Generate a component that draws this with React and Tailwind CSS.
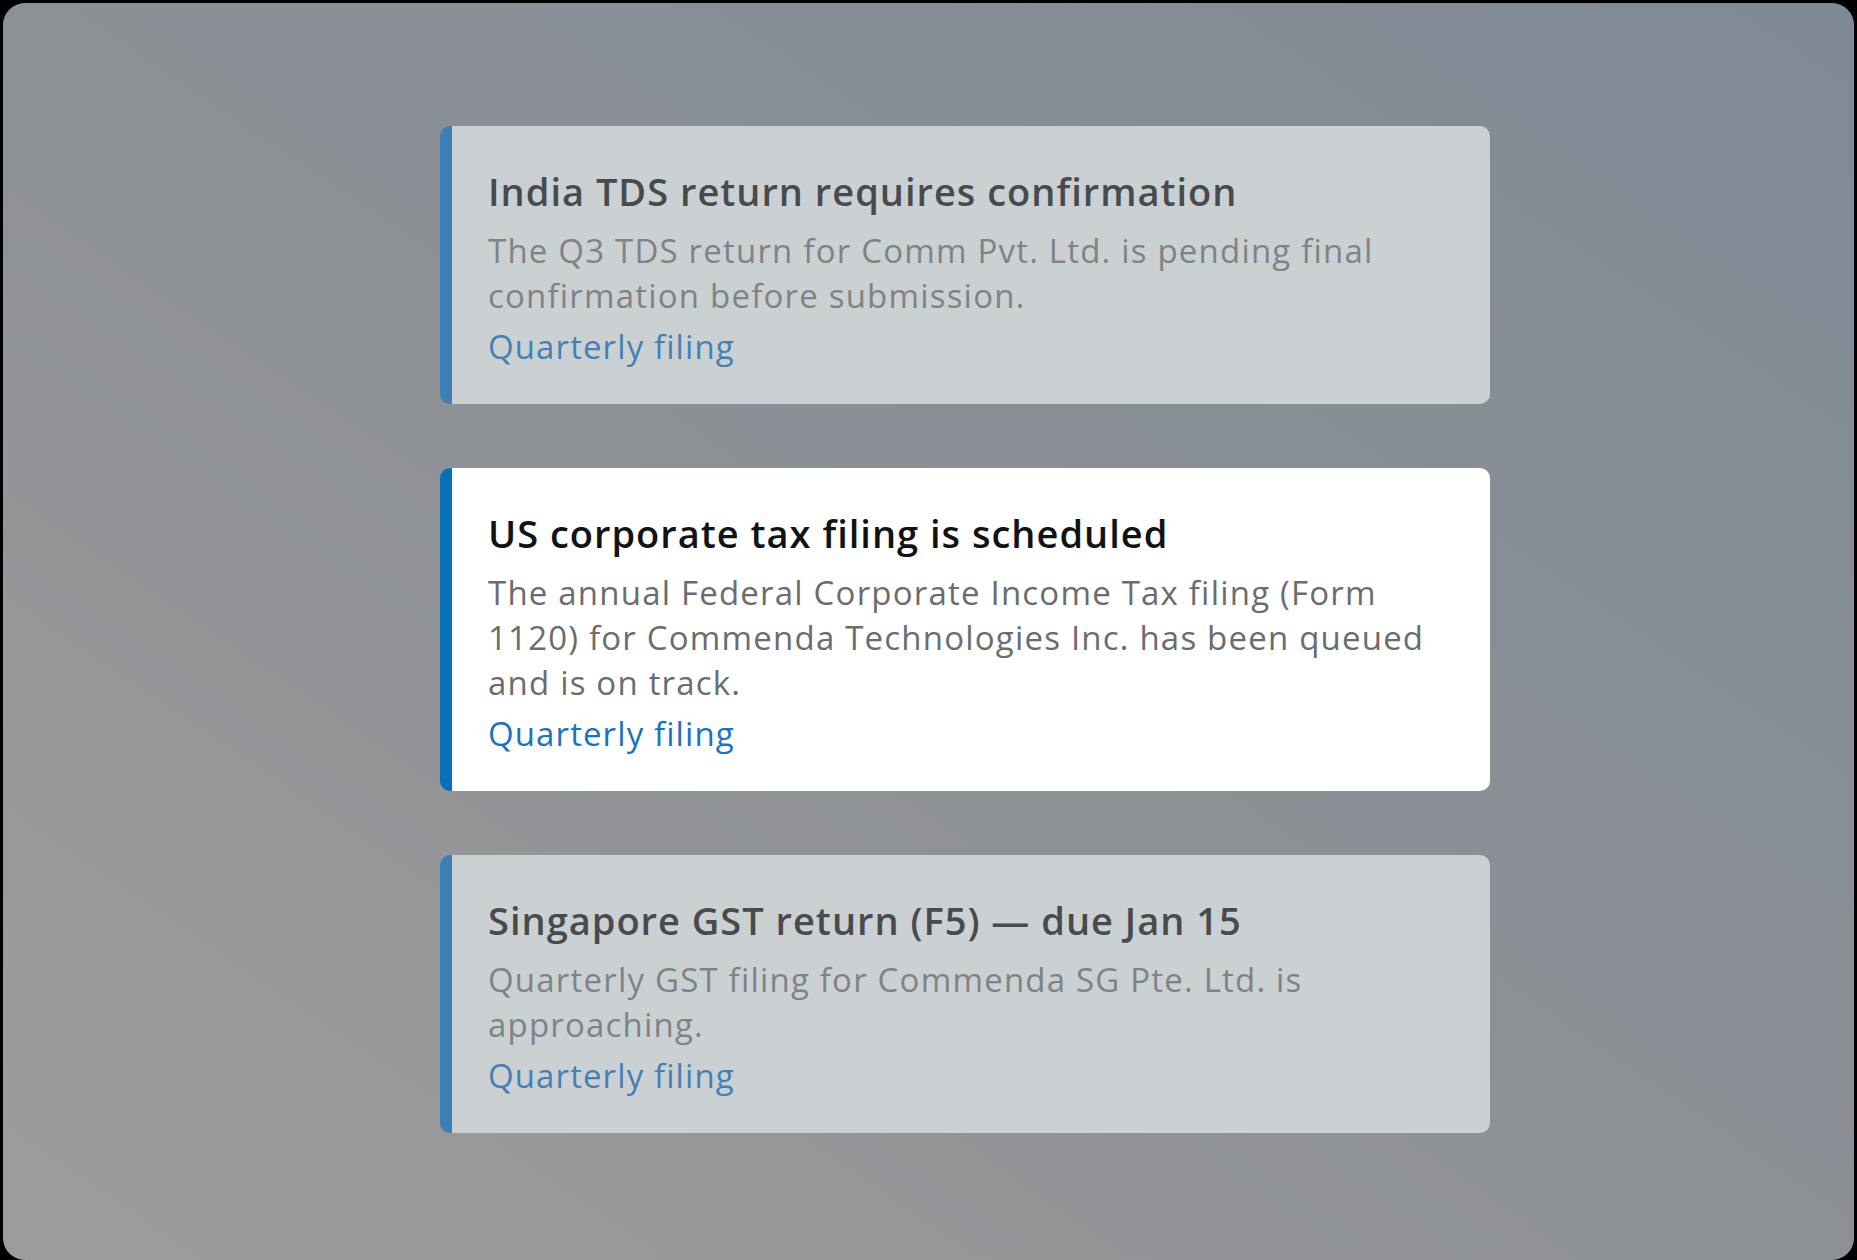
const notices = [
  {
    title: 'India TDS return requires confirmation',
    body: 'The Q3 TDS return for Comm Pvt. Ltd. is pending final confirmation before submission.',
    tag: 'Quarterly filing',
    active: false,
  },
  {
    title: 'US corporate tax filing is scheduled',
    body: 'The annual Federal Corporate Income Tax filing (Form 1120) for Commenda Technologies Inc. has been queued and is on track.',
    tag: 'Quarterly filing',
    active: true,
  },
  {
    title: 'Singapore GST return (F5) — due Jan 15',
    body: 'Quarterly GST filing for Commenda SG Pte. Ltd. is approaching.',
    tag: 'Quarterly filing',
    active: false,
  },
]

const NoticeCard = ({ title, body, tag, active }) => (
  <div
    className={
      active
        ? 'w-[1050px] rounded-[10px] border-l-[12px] border-[#0a6fbb] bg-white pl-[36px] pr-[40px] pt-[41px] pb-[35px]'
        : 'w-[1050px] rounded-[10px] border-l-[12px] border-[#3b7fb6] bg-[#cbd0d3] pl-[36px] pr-[40px] pt-[41px] pb-[35px]'
    }
  >
    <h3 className={active ? 'text-[38px] leading-[49px] tracking-[1px] font-semibold text-[#111214]' : 'text-[38px] leading-[49px] tracking-[1px] font-semibold text-[#484b4e]'}>
      {title}
    </h3>
    <p className={active ? 'mt-[12px] text-[33px] leading-[45px] tracking-[1.2px] text-[#6b6c6e]' : 'mt-[12px] text-[33px] leading-[45px] tracking-[1.2px] text-[#808386]'}>
      {body}
    </p>
    <p className={active ? 'mt-[6px] text-[33px] leading-[45px] tracking-[1.1px] text-[#1b72bf]' : 'mt-[6px] text-[33px] leading-[45px] tracking-[1.1px] text-[#4580b5]'}>
      {tag}
    </p>
  </div>
)

export default function App() {
  return (
    <div className="w-[1857px] h-[1260px] bg-black pt-[3px] px-[3px] overflow-hidden" style={{ fontFamily: '"Open Sans", "Noto Sans", sans-serif' }}>
      <div className="h-[1257px] rounded-[22px] bg-[linear-gradient(to_top_right,#9d9d9d_0%,#8e9195_45%,#7f8a96_100%)] pl-[437px] pt-[123px]">
        <div className="flex flex-col gap-[64px]">
          {notices.map((n) => (
            <NoticeCard key={n.title} {...n} />
          ))}
        </div>
      </div>
    </div>
  )
}
